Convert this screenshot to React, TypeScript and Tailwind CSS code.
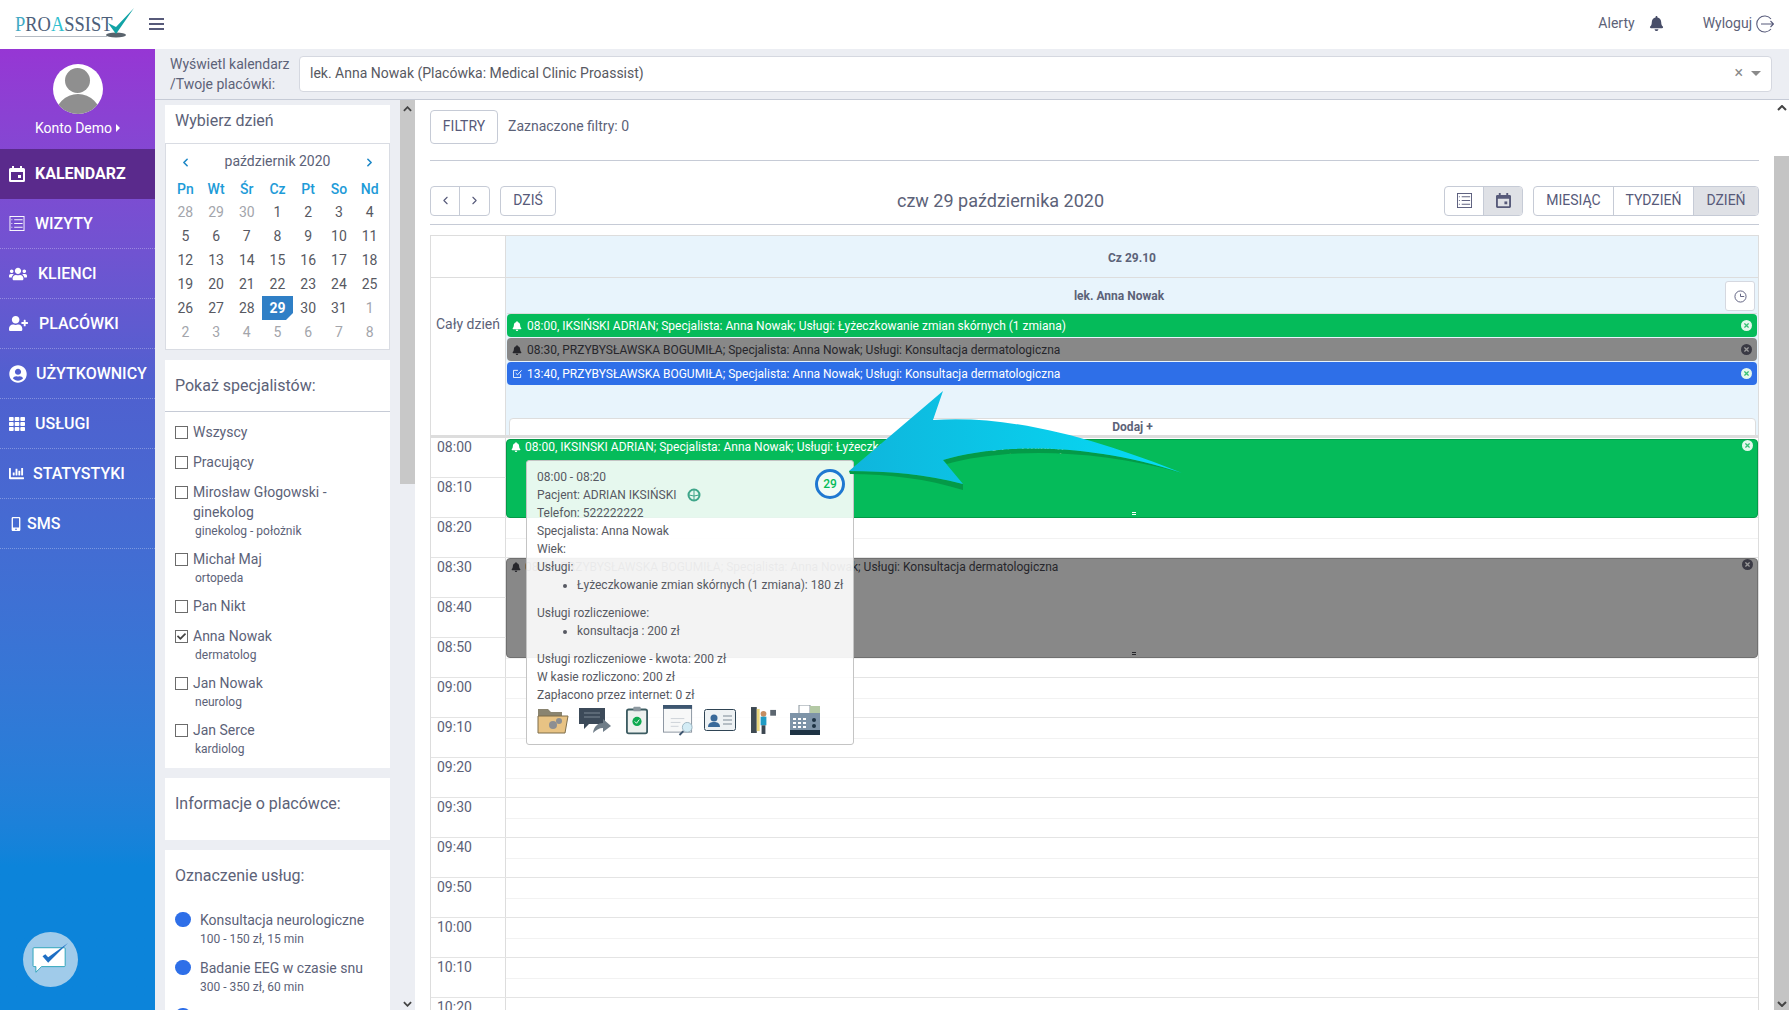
import { FaBell, FaChartBar, FaCheck, FaMobileAlt, FaTh, FaTimes, FaUserCircle, FaUserPlus, FaUsers } from "react-icons/fa";
import { FiChevronLeft, FiChevronRight } from "react-icons/fi";

const menu = [
  { label: "KALENDARZ", icon: <CalendarIcon />, gap: "gap-[10px]", active: true },
  { label: "WIZYTY", icon: <ListIcon />, gap: "gap-[10px]" },
  { label: "KLIENCI", icon: <FaUsers className="text-[18px]" />, gap: "gap-[11px]" },
  { label: "PLACÓWKI", icon: <FaUserPlus className="text-[19px]" />, gap: "gap-[11px]" },
  { label: "UŻYTKOWNICY", icon: <FaUserCircle className="text-[18px]" />, gap: "gap-[9px]" },
  { label: "USŁUGI", icon: <FaTh className="text-[16px]" />, gap: "gap-[10px]" },
  { label: "STATYSTYKI", icon: <FaChartBar className="text-[15px]" />, gap: "gap-[9px]" },
  { label: "SMS", icon: <FaMobileAlt className="text-[14px]" />, gap: "gap-[4px]" },
];

const weeks = [
  ["28", "29", "30", "1", "2", "3", "4"],
  ["5", "6", "7", "8", "9", "10", "11"],
  ["12", "13", "14", "15", "16", "17", "18"],
  ["19", "20", "21", "22", "23", "24", "25"],
  ["26", "27", "28", "29", "30", "31", "1"],
  ["2", "3", "4", "5", "6", "7", "8"],
];

const specialists = [
  { name: "Wszyscy" },
  { name: "Pracujący" },
  { name: "Mirosław Głogowski - ginekolog", sub: "ginekolog - położnik" },
  { name: "Michał Maj", sub: "ortopeda" },
  { name: "Pan Nikt" },
  { name: "Anna Nowak", sub: "dermatolog", checked: true },
  { name: "Jan Nowak", sub: "neurolog" },
  { name: "Jan Serce", sub: "kardiolog" },
];

const times = ["08:00", "08:10", "08:20", "08:30", "08:40", "08:50", "09:00", "09:10", "09:20", "09:30", "09:40", "09:50", "10:00", "10:10", "10:20"];

function CalendarIcon({ className = "w-[16px] h-[16px]" }: { className?: string }) {
  return (
    <svg viewBox="0 0 16 16" className={className} fill="currentColor">
      <path d="M3 0h2v2h6V0h2v2h1.500A1.500 1.500 0 0 1 16 3.500v11a1.500 1.500 0 0 1-1.500 1.500h-13A1.500 1.500 0 0 1 0 14.500v-11A1.500 1.500 0 0 1 1.500 2H3zM2 6v8h12V6z" />
      <rect x="9" y="9" width="3" height="3" />
    </svg>
  );
}

function ListIcon() {
  return (
    <svg viewBox="0 0 16 16" className="w-[16px] h-[15px]" fill="none" stroke="currentColor" strokeWidth="1">
      <rect x="0.500" y="0.500" width="15" height="15" />
      <path d="M2 4h1M5 4h9M2 8h1M5 8h9M2 12h1M5 12h9" />
    </svg>
  );
}

function BadgeX({ dark }: { dark?: boolean }) {
  return (
    <span className={`w-[11px] h-[11px] rounded-full flex items-center justify-center ${dark ? "bg-[#3a3a44]" : "bg-[#e4f7ec]"}`}>
      <FaTimes className={`text-[7px] ${dark ? "text-[#9a9a9a]" : "text-[#35c073]"}`} />
    </span>
  );
}

function AllDayEvent({ color, text, icon, dark }: { color: string; text: string; icon: React.ReactNode; dark?: boolean }) {
  return (
    <div className={`h-[23px] rounded-[4px] flex items-center pl-[4px] pr-[5px] text-[12px] ${color}`}>
      <span className="w-[12px] flex justify-center">{icon}</span>
      <span className="ml-[4px] flex-1 whitespace-nowrap">{text}</span>
      <BadgeX dark={dark} />
    </div>
  );
}

function PopupIcons() {
  return (
    <div className="flex items-center gap-[10px] h-[32px]">
      <svg viewBox="0 0 32 28" className="w-[32px] h-[28px]">
        <path d="M1 3h10l3 3h11v6H1z" fill="#8a8470" />
        <path d="M1 27V10h30l-3 17z" fill="#e8c384" stroke="#7d6d4a" />
        <circle cx="16" cy="19" r="4" fill="#8d8f92" />
        <circle cx="22" cy="15" r="3" fill="#8d8f92" />
      </svg>
      <svg viewBox="0 0 32 26" className="w-[32px] h-[26px]">
        <path d="M0 1h26v16H10l-5 5v-5H0z" fill="#3c4a59" />
        <path d="M5 6h16M5 10h16" stroke="#7a8794" />
        <path d="M14 26c1-7 5-10 10-10v-4l8 7-8 6v-4c-4 0-7 2-10 5z" fill="#6f7d88" />
      </svg>
      <svg viewBox="0 0 24 30" className="w-[22px] h-[29px] ml-[5px]">
        <rect x="1" y="3" width="22" height="26" rx="2" fill="#edf1ee" stroke="#3d5c62" strokeWidth="2" />
        <rect x="8" y="0" width="8" height="5" rx="1" fill="#8d98a0" />
        <circle cx="12" cy="16" r="5" fill="#0fa94f" />
        <path d="M9.500 16l2 2 3-4" stroke="#fff" fill="none" />
      </svg>
      <svg viewBox="0 0 32 32" className="w-[31px] h-[31px] ml-[5px]">
        <rect x="0.500" y="1" width="29" height="27" fill="#f7f8f8" stroke="#8b95a1" />
        <rect x="0" y="0" width="30" height="4" fill="#3d5670" />
        <path d="M8 14h14M8 18h10M8 22h8" stroke="#ccd2d8" />
        <circle cx="25" cy="23" r="5" fill="#d3ecf5" stroke="#9fb8c4" />
        <path d="M21 27l-4 4" stroke="#3d5670" strokeWidth="2" />
      </svg>
      <svg viewBox="0 0 32 22" className="w-[32px] h-[22px]">
        <rect x="0.500" y="0.500" width="31" height="21" rx="2" fill="#eef2f4" stroke="#2f4454" />
        <circle cx="10" cy="9" r="3.500" fill="#3a6a9a" />
        <path d="M4 18c0-4 3-5 6-5s6 1 6 5z" fill="#3a6a9a" />
        <path d="M19 7h9M19 11h9M19 15h9" stroke="#7c8a96" />
      </svg>
      <svg viewBox="0 0 26 30" className="w-[25px] h-[29px] ml-[5px]">
        <rect x="0" y="1" width="6" height="27" fill="#3d4952" />
        <rect x="6" y="3" width="3" height="23" fill="#e8d57c" />
        <circle cx="13" cy="8" r="3" fill="#c58d62" />
        <rect x="10" y="11" width="6" height="9" fill="#1f9bc4" />
        <rect x="11" y="20" width="4" height="9" fill="#3c4650" />
        <rect x="20" y="4" width="6" height="6" fill="#5c6670" />
      </svg>
      <svg viewBox="0 0 30 30" className="w-[30px] h-[30px] ml-[4px]">
        <rect x="9" y="0" width="11" height="9" fill="#fff" stroke="#88939c" />
        <rect x="20" y="1" width="10" height="7" fill="#b4c9a5" />
        <rect x="0" y="8" width="30" height="22" fill="#7e94a8" />
        <rect x="0" y="25" width="30" height="5" fill="#1e3344" />
        <path d="M3 14h3M8 14h3M13 14h3M3 18h3M8 18h3M13 18h3M3 22h3M8 22h3M13 22h3" stroke="#fff" strokeWidth="2" />
        <circle cx="24" cy="15" r="2" fill="#1e3344" />
        <circle cx="24" cy="21" r="2" fill="#1e3344" />
      </svg>
    </div>
  );
}

function Arrow() {
  return (
    <svg className="absolute left-[343px] top-[111px] z-20 pointer-events-none" width="340" height="110" viewBox="0 0 340 110">
      <defs>
        <linearGradient id="arrowFill" x1="0" x2="1" y1="0" y2="0">
          <stop offset="0" stopColor="#0fb5dc" />
          <stop offset="1" stopColor="#06dcf5" />
        </linearGradient>
      </defs>
      <path d="M1 85C40 85 78 90 114 101L114 95C75 85 40 82 0 82Z" fill="#049a48" />
      <path d="M94 71C140 57 230 50 333 84C240 58 150 60 98 75Z" fill="#049a48" />
      <path d="M0 82C40 82 75 85 114 95L94 71C140 57 230 50 333 84C260 55 170 25 84 31L94 2Z" fill="url(#arrowFill)" />
    </svg>
  );
}

export default function App() {
  return (
    <div className="w-[1789px] h-[1010px] overflow-hidden flex flex-col bg-white text-[#575962] font-['Roboto',sans-serif]">
      <header className="h-[49px] shrink-0 flex items-center pl-[15px] pr-[15px] pb-[2px] bg-white">
        <div className="w-[119px] h-[40px] relative flex items-center">
          <span className="font-['Liberation_Serif',serif] text-[22px] text-[#4d5f7a] whitespace-nowrap scale-x-[0.84] origin-left">
            <span className="text-[#3fa9c4]">P</span>RO<span className="text-[#2fc0cf]">A</span>SSIST
          </span>
          <span className="absolute left-0 top-[32px] w-[92px] h-px bg-[#b5bcc4]" />
          <svg viewBox="0 0 30 34" className="absolute left-[91px] top-[1px] w-[30px] h-[34px]">
            <ellipse cx="10" cy="30" rx="10" ry="2.500" fill="#59636c" />
            <path d="M2 18L10 22L28 3L10 29Z" fill="#12a3a6" />
          </svg>
        </div>
        <div className="ml-[15px] w-[15px] flex flex-col gap-[3px]">
          <span className="h-[2px] bg-[#575a7a]" />
          <span className="h-[2px] bg-[#575a7a]" />
          <span className="h-[2px] bg-[#575a7a]" />
        </div>
        <div className="ml-auto flex items-center text-[14px] text-[#5c6278]">
          <span>Alerty</span>
          <FaBell className="ml-[14px] text-[15px] text-[#474d68]" />
          <span className="ml-[39px]">Wyloguj</span>
          <svg viewBox="0 0 18 18" className="ml-[4px] w-[18px] h-[18px]" fill="none" stroke="#575a7a" strokeWidth="1.100">
            <path d="M15 4a8 8 0 1 0 0 10M5 9h12.500M14.500 6l3 3-3 3" />
          </svg>
        </div>
      </header>

      <div className="flex-1 flex min-h-0">
        <aside className="w-[155px] shrink-0 relative text-white bg-gradient-to-b from-[#9636d4] via-[#4f60cf] via-35% to-[#0c84da] to-85%">
          <div className="h-[100px] flex flex-col items-center pt-[15px]">
            <div className="w-[50px] h-[50px] rounded-full bg-white overflow-hidden relative">
              <div className="w-[25px] h-[25px] rounded-full bg-[#8f8f8f] mx-auto mt-[4px]" />
              <div className="w-[46px] h-[30px] rounded-t-[23px] bg-[#8f8f8f] mx-auto mt-[1px]" />
            </div>
            <div className="mt-[6px] text-[14px] leading-[16px] flex items-center">
              Konto Demo<span className="ml-[4px] border-l-[4px] border-l-white border-y-[4px] border-y-transparent" />
            </div>
          </div>
          <nav>
            {menu.map((item) => (
              <div
                key={item.label}
                className={`h-[50px] pl-[9px] flex items-center text-[16px] ${item.gap} border-b border-dotted border-white/30 ${item.active ? "bg-[#5a2a8c] font-bold border-b-0" : "font-medium"}`}
              >
                {item.icon}
                <span>{item.label}</span>
              </div>
            ))}
          </nav>
          <div className="absolute left-[23px] bottom-[23px] w-[55px] h-[55px] rounded-full bg-[#a0cbea] flex items-center justify-center">
            <svg viewBox="0 0 40 36" className="w-[38px] h-[34px]">
              <path d="M2 5h32a1 1 0 0 1 1 1v18a1 1 0 0 1-1 1H10l-6 6v-6H2a1 1 0 0 1-1-1V6a1 1 0 0 1 1-1z" fill="#fff" stroke="#2aa3b8" />
              <path d="M11 14l6 7L38 0 17 15l-3-3z" fill="#1f6fc4" />
            </svg>
          </div>
        </aside>

        <div className="flex-1 min-w-0 flex flex-col">
          <div className="h-[51px] shrink-0 bg-[#eceef3] border-b border-[#c6cbd6] flex items-center pl-[15px] pr-[17px]">
            <div className="w-[129px] text-[14px] leading-[20px] text-[#5c6278]">
              Wyświetl kalendarz
              <br />
              /Twoje placówki:
            </div>
            <div className="flex-1 h-[36px] mb-[1px] bg-white border border-[#d5d8e0] rounded-[4px] flex items-center pl-[10px] pr-[10px] pb-[1px] text-[14px] text-[#575962]">
              <span>lek. Anna Nowak (Placówka: Medical Clinic Proassist)</span>
              <span className="ml-auto text-[#8a8a8a] text-[16px] leading-[16px]">×</span>
              <span className="ml-[8px] border-t-[5px] border-t-[#8a8a8a] border-x-[5px] border-x-transparent" />
            </div>
          </div>

          <div className="flex-1 min-h-0 flex">
            <div className="w-[260px] shrink-0 bg-[#eceef3] flex overflow-hidden">
              <div className="w-[225px] ml-[10px] pt-[5px] flex flex-col gap-[10px]">
                <div className="bg-white">
                  <div className="h-[38px] pl-[10px] pt-[4px] text-[16px] leading-[24px] text-[#5c6278]">Wybierz dzień</div>
                  <div className="h-[207px] border border-[#d9dce3] px-[4px]">
                    <div className="h-[33px] flex items-center justify-between px-[9px] pt-[2px]">
                      <FiChevronLeft className="text-[#1e88c7] text-[13px] mt-[2px]" strokeWidth={3} />
                      <span className="text-[14px] text-[#5c6278]">październik 2020</span>
                      <FiChevronRight className="text-[#1e88c7] text-[13px] mt-[2px]" strokeWidth={3} />
                    </div>
                    <div className="grid grid-cols-7 text-[14px] text-center leading-[24px]">
                      {["Pn", "Wt", "Śr", "Cz", "Pt", "So", "Nd"].map((d) => (
                        <div key={d} className="font-medium text-[#1d9bd8] h-[23px]">{d}</div>
                      ))}
                      {weeks.map((week, w) =>
                        week.map((d, i) => {
                          const muted = (w === 0 && i < 3) || (w === 4 && i === 6) || w === 5;
                          const today = w === 4 && i === 3;
                          return (
                            <div key={`${w}-${i}`} className={`relative h-[24px] ${today ? "bg-[#2f7fc6] text-white font-bold" : muted ? "text-[#a3a5ab]" : "text-[#575962]"}`}>
                              {d}
                              {today && <span className="absolute right-0 bottom-0 border-b-[7px] border-b-white border-l-[7px] border-l-transparent" />}
                            </div>
                          );
                        }),
                      )}
                    </div>
                  </div>
                </div>

                <div className="bg-white h-[408px] shrink-0">
                  <div className="h-[52px] pl-[10px] pt-[14px] text-[16px] leading-[24px] text-[#5c6278] border-b border-[#c6cbd6]">Pokaż specjalistów:</div>
                  <div className="pl-[10px] pr-[8px] pt-[10px] flex flex-col gap-[10px]">
                    {specialists.map((s) => (
                      <div key={s.name} className="flex text-[14px] leading-[20px] text-[#5c6278]">
                        <span className="w-[13px] h-[13px] mt-[4px] mr-[5px] shrink-0 border border-[#6b6b6b] flex items-center justify-center">
                          {s.checked && <FaCheck className="text-[9px] text-[#444]" />}
                        </span>
                        <div className="min-w-0">
                          <div>{s.name}</div>
                          {s.sub && <div className="text-[12px] leading-[16px] mt-[1px] ml-[2px]">{s.sub}</div>}
                        </div>
                      </div>
                    ))}
                  </div>
                </div>

                <div className="bg-white h-[62px] shrink-0 pl-[10px] pt-[14px] text-[16px] leading-[24px] text-[#5c6278]">Informacje o placówce:</div>

                <div className="bg-white shrink-0 pl-[10px] pt-[14px]">
                  <div className="text-[16px] leading-[24px] text-[#5c6278]">Oznaczenie usług:</div>
                  <div className="mt-[23px] flex flex-col gap-[10px] text-[#5c6278]">
                    {[
                      ["Konsultacja neurologiczne", "100 - 150 zł, 15 min"],
                      ["Badanie EEG w czasie snu", "300 - 350 zł, 60 min"],
                    ].map(([name, sub]) => (
                      <div key={name} className="flex">
                        <span className="w-[16px] h-[15px] rounded-full bg-[#2e6fe8] mt-[1px] mr-[9px] shrink-0" />
                        <div>
                          <div className="text-[14px] leading-[18px]">{name}</div>
                          <div className="text-[12px] leading-[19px] mt-[1px]">{sub}</div>
                        </div>
                      </div>
                    ))}
                    <span className="w-[16px] h-[15px] rounded-full bg-[#2e6fe8] mt-[1px] shrink-0" />
                  </div>
                </div>
              </div>
              <div className="w-[15px] ml-auto shrink-0 relative">
                <div className="h-[384px] bg-[#c8c8c8] mt-0 relative">
                  <svg viewBox="0 0 10 6" className="absolute left-[3px] top-[6px] w-[9px] h-[6px]" fill="none" stroke="#444" strokeWidth="2"><path d="M1 5l4-4 4 4" /></svg>
                </div>
                <svg viewBox="0 0 10 6" className="absolute left-[3px] bottom-[3px] w-[9px] h-[6px]" fill="none" stroke="#444" strokeWidth="2"><path d="M1 1l4 4 4-4" /></svg>
              </div>
            </div>

            <main className="flex-1 min-w-0 bg-white px-[15px] pt-[10px] overflow-hidden">
              <div className="flex items-center h-[34px]">
                <button className="h-[34px] w-[68px] border border-[#c6cbd6] rounded-[4px] text-[14px] text-[#575a7a] pb-[1px]">FILTRY</button>
                <span className="ml-[10px] text-[14px] text-[#5c6278] pb-[2px]">Zaznaczone filtry: 0</span>
              </div>
              <div className="mt-[16px] border-t border-[#c6cbd6]" />
              <div className="mt-[25px] h-[39px] pb-[9px] border-b border-[#c6cbd6] flex items-center relative">
                <div className="flex h-[30px] border border-[#c6cbd6] rounded-[4px] text-[#575a7a]">
                  <span className="w-[29px] flex items-center justify-center border-r border-[#c6cbd6]"><FiChevronLeft className="text-[13px]" /></span>
                  <span className="w-[29px] flex items-center justify-center"><FiChevronRight className="text-[13px]" /></span>
                </div>
                <button className="ml-[10px] h-[30px] w-[56px] border border-[#c6cbd6] rounded-[4px] text-[14px] text-[#575a7a]">DZIŚ</button>
                <div className="flex-1 text-center text-[18px] text-[#5c6278] pl-[1px]">czw 29 października 2020</div>
                <div className="flex h-[30px] border border-[#c6cbd6] rounded-[4px] text-[#575a7a] overflow-hidden">
                  <span className="w-[39px] flex items-center justify-center border-r border-[#c6cbd6]">
                    <svg viewBox="0 0 16 16" className="w-[15px] h-[15px]" fill="none" stroke="#575a7a"><rect x="0.500" y="0.500" width="15" height="15" /><path d="M2 4h1M5 4h9M2 8h1M5 8h9M2 12h1M5 12h9" /></svg>
                  </span>
                  <span className="w-[38px] flex items-center justify-center bg-[#dfe1e6]"><CalendarIcon className="w-[15px] h-[15px]" /></span>
                </div>
                <div className="ml-[10px] flex h-[30px] border border-[#c6cbd6] rounded-[4px] text-[14px] text-[#575a7a] overflow-hidden">
                  <span className="w-[80px] flex items-center justify-center border-r border-[#c6cbd6]">MIESIĄC</span>
                  <span className="w-[80px] flex items-center justify-center border-r border-[#c6cbd6]">TYDZIEŃ</span>
                  <span className="w-[64px] flex items-center justify-center bg-[#dfe1e6]">DZIEŃ</span>
                </div>
              </div>

              <div className="mt-[10px] border-x border-t border-[#dddddd] text-[#5c6278] relative">
                <div className="flex border-b border-[#dddddd]">
                  <div className="w-[75px] shrink-0 h-[41px] border-r border-[#dddddd]" />
                  <div className="flex-1 bg-[#e8f4fc] flex items-center justify-center text-[12px] font-bold pt-[2px]">Cz 29.10</div>
                </div>
                <div className="flex border-b-[3px] border-[#dddddd]">
                  <div className="w-[75px] shrink-0 border-r border-[#dddddd] pt-[36px] text-center text-[14px] leading-[20px]">Cały dzień</div>
                  <div className="flex-1 bg-[#e8f4fc] h-[157px] px-[1px] relative">
                    <div className="h-[36px] flex items-center justify-center text-[12px] font-bold pr-[26px] border-b border-[#dddddd]">lek. Anna Nowak</div>
                    <div className="absolute right-[3px] top-[3px] w-[30px] h-[30px] bg-white border border-[#d5d8e0] rounded-[3px] flex items-center justify-center">
                      <svg viewBox="0 0 14 14" className="w-[13px] h-[13px]" fill="none" stroke="#575a7a"><circle cx="7" cy="7" r="6" /><path d="M7 7h4M7 4v3" /></svg>
                    </div>
                    <div className="flex flex-col gap-px">
                      <AllDayEvent color="bg-[#05bb5a] text-white" text="08:00, IKSIŃSKI ADRIAN; Specjalista: Anna Nowak; Usługi: Łyżeczkowanie zmian skórnych (1 zmiana)" icon={<FaBell className="text-[10px]" />} />
                      <AllDayEvent color="bg-[#888888] text-[#26262b]" text="08:30, PRZYBYSŁAWSKA BOGUMIŁA; Specjalista: Anna Nowak; Usługi: Konsultacja dermatologiczna" icon={<FaBell className="text-[10px]" />} dark />
                      <AllDayEvent
                        color="bg-[#2e6fe8] text-white"
                        text="13:40, PRZYBYSŁAWSKA BOGUMIŁA; Specjalista: Anna Nowak; Usługi: Konsultacja dermatologiczna"
                        icon={
                          <svg viewBox="0 0 10 10" className="w-[9px] h-[9px]" fill="none" stroke="#fff">
                            <path d="M8.500 5.500v4h-8v-8h5M3 4.500l2 2 4.500-5" />
                          </svg>
                        }
                      />
                    </div>
                    <div className="absolute left-[3px] right-[2px] bottom-[-1px] h-[18px] bg-white border border-[#dddddd] rounded-t-[4px] flex items-center justify-center text-[12px] font-bold leading-none">Dodaj +</div>
                    <Arrow />
                  </div>
                </div>

                <div className="relative">
                  {times.map((t) => (
                    <div key={t} className="flex h-[40px] border-b border-[#e4e4e4]">
                      <div className="w-[75px] shrink-0 border-r border-[#dddddd] pl-[6px] text-[14px] leading-[18px]">{t}</div>
                      <div className="flex-1 relative"><div className="mt-[20px] border-t border-[#f2f2f2]" /></div>
                    </div>
                  ))}
                  <div className="absolute left-[75px] right-0 top-[1px] h-[79px] bg-[#05bb5a] border border-[#049a48] rounded-[4px] text-white text-[12px] flex pl-[4px] pr-[4px]">
                    <FaBell className="text-[10px] mt-[2px]" />
                    <span className="ml-[4px] flex-1 whitespace-nowrap leading-[15px]">08:00, IKSINSKI ADRIAN; Specjalista: Anna Nowak; Usługi: Łyżeczkowanie zmian skórnych (1 zmiana)</span>
                    <BadgeX />
                    <span className="absolute left-1/2 bottom-[2px] w-[4px] h-[3px] border-y border-white" />
                  </div>
                  <div className="absolute left-[75px] right-0 top-[120px] h-[100px] bg-[#888888] border border-[#707070] rounded-[4px] text-[#26262b] text-[12px] flex pl-[4px] pr-[4px]">
                    <FaBell className="text-[10px] mt-[3px]" />
                    <span className="ml-[4px] flex-1 whitespace-nowrap leading-[16px]">08:30, PRZYBYSŁAWSKA BOGUMIŁA; Specjalista: Anna Nowak; Usługi: Konsultacja dermatologiczna</span>
                    <BadgeX dark />
                    <span className="absolute left-1/2 bottom-[2px] w-[4px] h-[3px] border-y border-[#26262b]" />
                  </div>

                  <div className="absolute left-[95px] top-[22px] w-[328px] h-[285px] bg-white/90 border border-[#c4c4c4] rounded-[3px] pl-[10px] pt-[7px] text-[12px] leading-[18px] text-[#575962]">
                    <div>08:00 - 08:20</div>
                    <div className="flex items-center">
                      Pacjent: ADRIAN IKSIŃSKI
                      <svg viewBox="0 0 14 14" className="ml-[11px] w-[14px] h-[14px]" fill="none" stroke="#3fa68a" strokeWidth="2"><circle cx="7" cy="7" r="5.500" /><path d="M7 2v10M2 7l5 1 5-1" strokeWidth="1" /></svg>
                    </div>
                    <div>Telefon: 522222222</div>
                    <div>Specjalista: Anna Nowak</div>
                    <div>Wiek:</div>
                    <div>Usługi:</div>
                    <ul className="list-disc pl-[40px] pb-[10px]"><li>Łyżeczkowanie zmian skórnych (1 zmiana): 180 zł</li></ul>
                    <div>Usługi rozliczeniowe:</div>
                    <ul className="list-disc pl-[40px] pb-[10px]"><li>konsultacja : 200 zł</li></ul>
                    <div>Usługi rozliczeniowe - kwota: 200 zł</div>
                    <div>W kasie rozliczono: 200 zł</div>
                    <div>Zapłacono przez internet: 0 zł</div>
                    <PopupIcons />
                    <div className="absolute right-[8px] top-[8px] w-[30px] h-[30px] rounded-full border-[3px] border-[#1f78d1] bg-white/40 flex items-center justify-center text-[12px] font-medium text-[#05bb5a]">29</div>
                  </div>
                </div>
              </div>
            </main>

            <div className="w-[15px] shrink-0 bg-white relative">
              <div className="mt-[56px] h-full bg-[#c4c4c4]" />
              <svg viewBox="0 0 10 6" className="absolute left-[3px] top-[5px] w-[10px] h-[6px]" fill="none" stroke="#444" strokeWidth="2"><path d="M1 5l4-4 4 4" /></svg>
              <svg viewBox="0 0 10 6" className="absolute left-[3px] bottom-[3px] w-[10px] h-[6px]" fill="none" stroke="#444" strokeWidth="2"><path d="M1 1l4 4 4-4" /></svg>
            </div>
          </div>
        </div>
      </div>
    </div>
  );
}
